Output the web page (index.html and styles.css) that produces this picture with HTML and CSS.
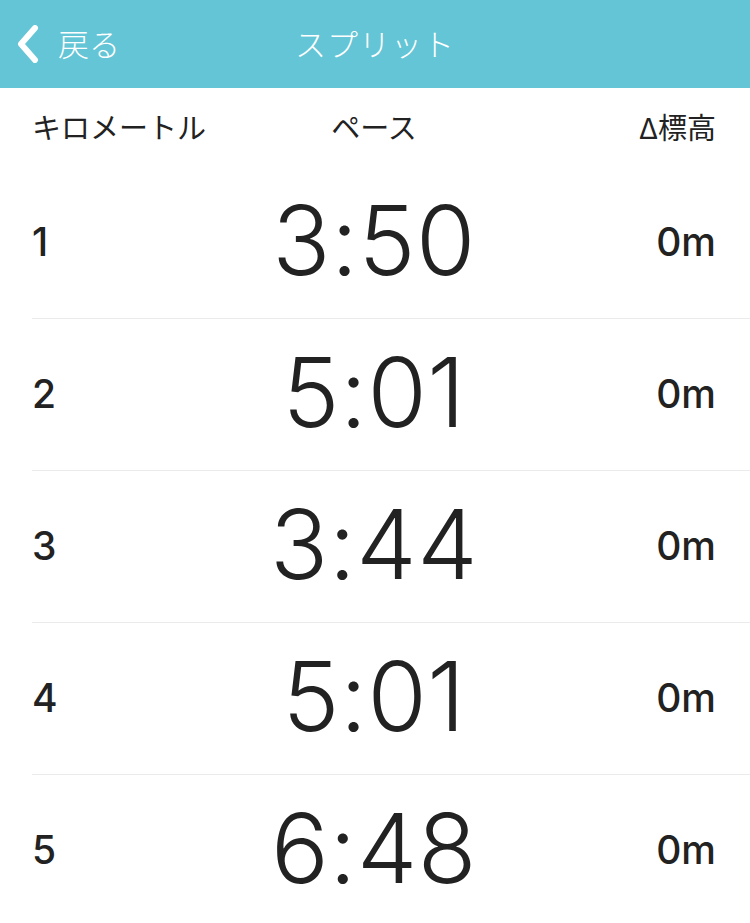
FILE: index.html
```html
<!DOCTYPE html>
<html lang="ja">
<head>
<meta charset="utf-8">
<title>スプリット</title>
<link rel="stylesheet" href="styles.css">
</head>
<body>
<header class="nav">
  <div class="nav-back">
    <svg class="chev" width="24" height="38" viewBox="0 0 24 38"><path d="M19 3 L5 19 L19 35" fill="none" stroke="#fff" stroke-width="6" stroke-linecap="round" stroke-linejoin="round"/></svg>
    <span class="back-label">戻る</span>
  </div>
  <div class="nav-title">スプリット</div>
</header>
<div class="cols">
  <span class="c-left">キロメートル</span>
  <span class="c-mid">ペース</span>
  <span class="c-right">Δ標高</span>
</div>
<div class="list">
  <div class="row"><span class="km">1</span><span class="pace">3:50</span><span class="elev">0m</span></div>
  <div class="row"><span class="km">2</span><span class="pace">5:01</span><span class="elev">0m</span></div>
  <div class="row"><span class="km">3</span><span class="pace">3:44</span><span class="elev">0m</span></div>
  <div class="row"><span class="km">4</span><span class="pace">5:01</span><span class="elev">0m</span></div>
  <div class="row"><span class="km">5</span><span class="pace">6:48</span><span class="elev">0m</span></div>
</div>
</body>
</html>
```
FILE: styles.css
```css
html, body {
  margin: 0;
  padding: 0;
  background: #fff;
  overflow: hidden;
}
body {
  font-family: Inter, "Noto Sans CJK JP", sans-serif;
  color: #222;
}
.nav {
  height: 84px;
  padding-bottom: 4px;
  background: #63c5d5;
  display: grid;
  grid-template-columns: 1fr auto 1fr;
  align-items: center;
  color: #fff;
}
.nav-back {
  grid-column: 1;
  grid-row: 1;
  display: flex;
  align-items: center;
  padding-left: 16px;
  gap: 18px;
}
.chev { display: block; margin-top: 4px; }
.back-label {
  font-family: "Noto Sans CJK JP", sans-serif;
  font-weight: 300;
  font-size: 31px;
  line-height: 1;
}
.nav-title {
  grid-column: 2;
  grid-row: 1;
  font-family: "Noto Sans CJK JP", sans-serif;
  font-weight: 300;
  font-size: 31px;
  line-height: 1;
  letter-spacing: 1px;
}
.cols {
  height: 79px;
  margin-left: 32px;
  padding-right: 34px;
  display: grid;
  grid-template-columns: 1fr auto 1fr;
  align-items: center;
  font-family: "Noto Sans CJK JP", sans-serif;
  font-size: 29px;
  line-height: 1;
  color: #222;
}
.c-left, .c-mid, .c-right { padding-bottom: 3px; }
.c-right { justify-self: end; }
.list { margin-left: 32px; }
.row {
  height: 151px;
  border-bottom: 1px solid #ebebeb;
  padding-right: 34px;
  display: grid;
  grid-template-columns: 1fr auto 1fr;
  align-items: center;
}
.km, .elev {
  font-size: 39px;
  font-weight: 500;
  line-height: 1;
  padding-bottom: 2px;
}
.elev { justify-self: end; }
.pace {
  font-size: 96px;
  font-weight: 350;
  line-height: 1;
  letter-spacing: 0.5px;
  padding-bottom: 6px;
}
```
